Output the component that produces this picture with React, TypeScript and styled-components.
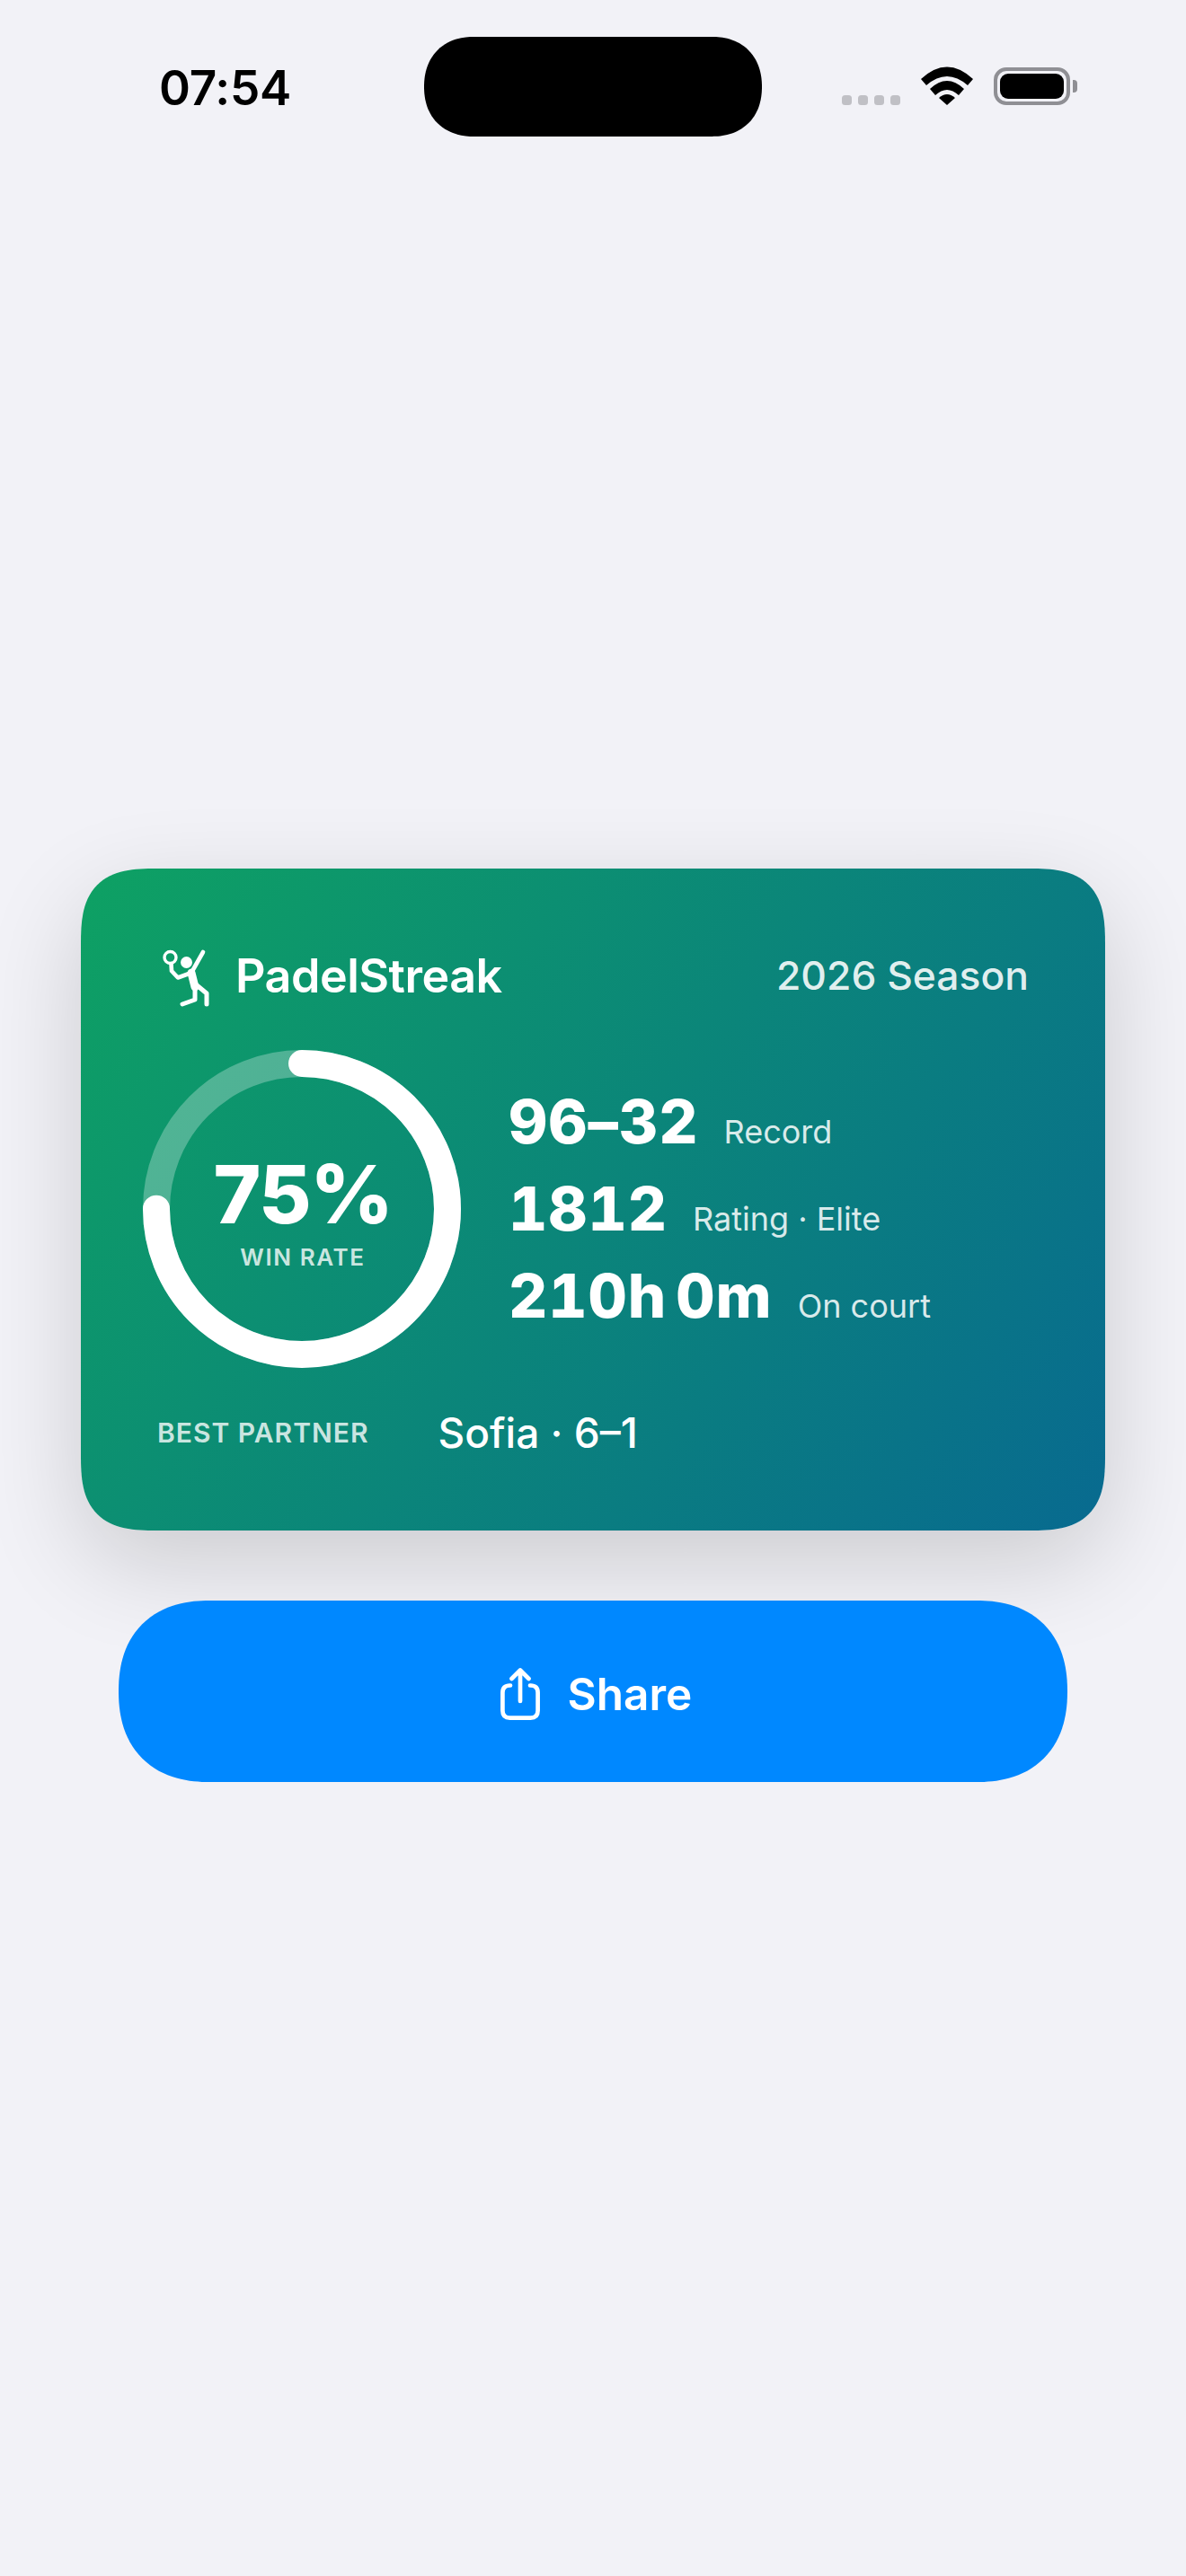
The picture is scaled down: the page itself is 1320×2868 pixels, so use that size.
import React from "react";
import styled, { createGlobalStyle } from "styled-components";

const Global = createGlobalStyle`
  html, body { margin: 0; padding: 0; background: #f2f2f7; }
  body { font-family: Inter, "Liberation Sans", sans-serif; }
`;

const Page = styled.div`
  width: 1320px;
  height: 2868px;
  overflow: hidden;
  display: flex;
  flex-direction: column;
  background: #f2f2f7;
`;

const StatusBar = styled.header`
  display: grid;
  grid-template-columns: 472px 376px 1fr;
  padding-top: 41px;
  height: 111px;
`;

const Time = styled.div`
  padding: 29px 0 0 177px;
  font-size: 53px;
  line-height: 57px;
  font-weight: 600;
  color: #000;
  letter-spacing: -0.2px;
`;

const Island = styled.div`
  height: 111px;
  background: #000;
  border-radius: 56px;
  corner-shape: superellipse(1.15);
`;

const StatusIcons = styled.div`
  display: flex;
  align-items: flex-end;
  padding: 0 0 35px 89px;
`;

const Dots = styled.div`
  display: flex;
  gap: 7px;
  margin-right: 23px;
`;

const Dot = styled.span`
  width: 11px;
  height: 11px;
  border-radius: 3.5px;
  background: #c0c0c5;
`;

const Battery = styled.div`
  position: relative;
  box-sizing: border-box;
  width: 85px;
  height: 42px;
  margin-left: 23px;
  padding: 3px;
  border: 4px solid #8f8f94;
  border-radius: 14px;
  &::after {
    content: "";
    position: absolute;
    right: -12px;
    top: 10px;
    width: 5px;
    height: 14px;
    border-radius: 0 4px 4px 0;
    background: #8f8f94;
  }
`;

const BatteryFill = styled.div`
  height: 100%;
  background: #000;
  border-radius: 9px;
`;

const Main = styled.main`
  display: flex;
  flex-direction: column;
  align-items: center;
  padding-top: 815px;
`;

const Card = styled.section`
  box-sizing: border-box;
  width: 1140px;
  height: 737px;
  padding: 88px 85px 0 80px;
  border-radius: 84px;
  corner-shape: superellipse(1.5);
  background: linear-gradient(126deg, #0ea163 0%, #086a90 100%);
  box-shadow: 0 36px 110px rgba(0, 0, 0, 0.16);
  color: #fff;
  display: flex;
  flex-direction: column;
`;

const CardHead = styled.div`
  display: flex;
  justify-content: space-between;
  align-items: center;
  height: 62px;
`;

const Brand = styled.div`
  display: flex;
  align-items: center;
  gap: 20px;
  padding-left: 2px;
  font-size: 52px;
  font-weight: 600;
  letter-spacing: -0.5px;
`;

const Season = styled.div`
  font-size: 44.4px;
  font-weight: 500;
  color: rgba(255, 255, 255, 0.88);
`;

const Body = styled.div`
  display: flex;
  align-items: center;
  margin: 52px 0 0 -11px;
  gap: 52px;
`;

const RingWrap = styled.div`
  position: relative;
  width: 354px;
  height: 354px;
  flex: none;
`;

const RingCenter = styled.div`
  position: absolute;
  inset: 0;
  display: flex;
  flex-direction: column;
  align-items: center;
  justify-content: center;
  padding-left: 2px;
`;

const Percent = styled.div`
  font-size: 90px;
  line-height: 88px;
  font-weight: 800;
  letter-spacing: -1.5px;
  margin: 8px 0 11px;
`;

const RingLabel = styled.div`
  font-size: 26px;
  line-height: 30px;
  font-weight: 600;
  letter-spacing: 1.6px;
  color: rgba(255, 255, 255, 0.8);
`;

const Stats = styled.div`
  display: flex;
  flex-direction: column;
  gap: 17px;
  padding-left: 1px;
`;

const StatRow = styled.div`
  display: flex;
  align-items: baseline;
  gap: 28px;
  height: 80px;
  line-height: 80px;
`;

const StatValue = styled.span`
  font-size: 67px;
  font-weight: 800;
  letter-spacing: 1px;
  font-variant-numeric: tabular-nums;
  word-spacing: -9px;
`;

const StatLabel = styled.span`
  font-size: 36px;
  font-weight: 400;
  color: rgba(255, 255, 255, 0.85);
`;

const Partner = styled.div`
  display: flex;
  align-items: center;
  gap: 77px;
  margin: 44px 0 0 5px;
`;

const PartnerLabel = styled.span`
  font-size: 30px;
  font-weight: 600;
  letter-spacing: 1px;
  color: rgba(255, 255, 255, 0.8);
`;

const PartnerValue = styled.span`
  font-size: 46px;
  font-weight: 500;
`;

const ShareButton = styled.button`
  box-sizing: border-box;
  width: 1056px;
  height: 202px;
  margin-top: 78px;
  padding: 6px 0 0 7px;
  border: 0;
  border-radius: 101px;
  corner-shape: superellipse(1.2);
  background: #0088ff;
  color: #fff;
  font-family: inherit;
  font-size: 49.5px;
  font-weight: 600;
  display: flex;
  align-items: center;
  justify-content: center;
  gap: 31px;
`;

const Wifi = () => (
  <svg width="58" height="43" viewBox="0 0 58 43" fill="#000">
    <path d="M0 14 Q29 -13 58 14 L52 21 Q29 1 6 21Z" />
    <path d="M10 25 Q29 7 48 25 L42 32 Q29 20 16 32Z" />
    <path d="M20 35 Q29 27 38 35 L29 43Z" />
  </svg>
);

const Player = () => (
  <svg width="70" height="80" viewBox="0 5 70 80" fill="none" stroke="#fff" strokeLinecap="round" strokeLinejoin="round">
    <circle cx="17.5" cy="25" r="6.5" strokeWidth="3.4" />
    <circle cx="35.5" cy="30.5" r="6.5" fill="#fff" stroke="none" />
    <path d="M18.5 32 L19 40 L26 47.5 L41 42 M41 42 L54 19" strokeWidth="4.6" />
    <path d="M41 42 L45 58" strokeWidth="9" />
    <path d="M46 55 L58 65 V77 M45 58 L45 72 L31 77" strokeWidth="5" />
  </svg>
);

const ShareGlyph = () => (
  <svg width="44" height="58" viewBox="0 0 44 58" fill="none" stroke="#fff" strokeWidth="4.7" strokeLinecap="round" strokeLinejoin="round">
    <path d="M11 19.5 H10.5 Q2.4 19.5 2.4 27.5 V47.5 Q2.4 55.6 10.5 55.6 H33.5 Q41.6 55.6 41.6 47.5 V27.5 Q41.6 19.5 33.5 19.5 H33" />
    <path d="M22 37 V3 M12.5 12 L22 2.5 L31.5 12" />
  </svg>
);

export default function App() {
  const r = 162;
  const c = 2 * Math.PI * r;
  return (
    <Page>
      <Global />
      <StatusBar>
        <Time>07:54</Time>
        <Island />
        <StatusIcons>
          <Dots>
            <Dot />
            <Dot />
            <Dot />
            <Dot />
          </Dots>
          <Wifi />
          <Battery>
            <BatteryFill />
          </Battery>
        </StatusIcons>
      </StatusBar>
      <Main>
        <Card>
          <CardHead>
            <Brand>
              <Player />
              PadelStreak
            </Brand>
            <Season>2026 Season</Season>
          </CardHead>
          <Body>
            <RingWrap>
              <svg width="354" height="354" viewBox="0 0 354 354" fill="none">
                <circle cx="177" cy="177" r={r} stroke="rgba(255,255,255,0.28)" strokeWidth="30" />
                <circle
                  cx="177"
                  cy="177"
                  r={r}
                  stroke="#fff"
                  strokeWidth="30"
                  strokeLinecap="round"
                  strokeDasharray={`${c * 0.75} ${c}`}
                  transform="rotate(-90 177 177)"
                />
              </svg>
              <RingCenter>
                <Percent>75%</Percent>
                <RingLabel>WIN RATE</RingLabel>
              </RingCenter>
            </RingWrap>
            <Stats>
              <StatRow>
                <StatValue>96–32</StatValue>
                <StatLabel>Record</StatLabel>
              </StatRow>
              <StatRow>
                <StatValue>1812</StatValue>
                <StatLabel>Rating · Elite</StatLabel>
              </StatRow>
              <StatRow>
                <StatValue>210h 0m</StatValue>
                <StatLabel>On court</StatLabel>
              </StatRow>
            </Stats>
          </Body>
          <Partner>
            <PartnerLabel>BEST PARTNER</PartnerLabel>
            <PartnerValue>Sofia · 6–1</PartnerValue>
          </Partner>
        </Card>
        <ShareButton>
          <ShareGlyph />
          Share
        </ShareButton>
      </Main>
    </Page>
  );
}
